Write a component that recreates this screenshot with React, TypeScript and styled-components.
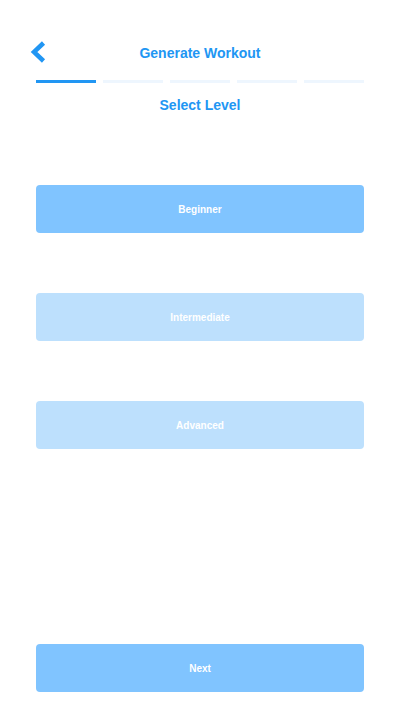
import React, { useState } from "react";
import styled, { createGlobalStyle } from "styled-components";

const GlobalStyle = createGlobalStyle`
  html, body {
    margin: 0;
    padding: 0;
    background: #ffffff;
    font-family: "Liberation Sans", Arial, sans-serif;
  }
`;

const Page = styled.div`
  box-sizing: border-box;
  width: 400px;
  min-height: 100vh;
  padding: 36px 36px 20px;
  display: flex;
  flex-direction: column;
`;

const Header = styled.header`
  display: grid;
  grid-template-columns: 1fr auto 1fr;
  align-items: center;
  height: 34px;
  margin: 0 -6px;
`;

const BackButton = styled.button`
  justify-self: start;
  display: flex;
  align-items: center;
  padding: 0;
  margin-top: -3px;
  border: none;
  background: none;
  cursor: pointer;
`;

const Title = styled.h1`
  margin: 0;
  font-size: 14px;
  font-weight: 700;
  color: #2196f3;
`;

const Steps = styled.div`
  display: grid;
  grid-template-columns: repeat(5, 1fr);
  gap: 7px;
  margin-top: 10px;
`;

const Step = styled.div<{ $active: boolean }>`
  height: 3px;
  background: ${({ $active }) => ($active ? "#2196f3" : "#eef6fe")};
`;

const Subtitle = styled.h2`
  margin: 14px 0 0;
  text-align: center;
  font-size: 14px;
  line-height: 16px;
  font-weight: 700;
  color: #2196f3;
`;

const Options = styled.div`
  display: flex;
  flex-direction: column;
  gap: 60px;
  margin-top: 72px;
`;

const Choice = styled.button<{ $selected: boolean }>`
  height: 48px;
  border: none;
  border-radius: 4px;
  background: ${({ $selected }) => ($selected ? "#80c4ff" : "#bde0fd")};
  color: #ffffff;
  font-family: inherit;
  font-size: 10px;
  font-weight: 700;
  cursor: pointer;
`;

const NextButton = styled.button`
  margin-top: auto;
  height: 48px;
  border: none;
  border-radius: 4px;
  background: #80c4ff;
  color: #ffffff;
  font-family: inherit;
  font-size: 10px;
  font-weight: 700;
  cursor: pointer;
`;

const levels = ["Beginner", "Intermediate", "Advanced"];

export default function App() {
  const [level, setLevel] = useState("Beginner");

  return (
    <>
      <GlobalStyle />
      <Page>
        <Header>
          <BackButton aria-label="Back">
            <svg width="16" height="24" viewBox="0 0 16 24">
              <polyline
                points="13.5,3 4,12 13.5,21"
                fill="none"
                stroke="#2196f3"
                strokeWidth="4.5"
                strokeLinejoin="miter"
              />
            </svg>
          </BackButton>
          <Title>Generate Workout</Title>
          <span />
        </Header>
        <Steps>
          {[0, 1, 2, 3, 4].map((i) => (
            <Step key={i} $active={i === 0} />
          ))}
        </Steps>
        <Subtitle>Select Level</Subtitle>
        <Options>
          {levels.map((l) => (
            <Choice key={l} $selected={l === level} onClick={() => setLevel(l)}>
              {l}
            </Choice>
          ))}
        </Options>
        <NextButton>Next</NextButton>
      </Page>
    </>
  );
}
